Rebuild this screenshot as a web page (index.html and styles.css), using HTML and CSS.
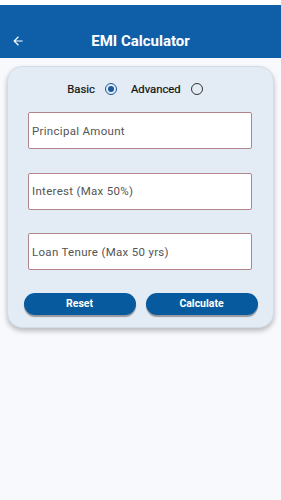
FILE: index.html
```html
<html>
  <head>
    <link rel="stylesheet" href="styles.css">
  </head>
  <body>
    <div class="statusBar"></div>
    <div class="appBar">
      <svg class="backIcon" width="14" height="14" viewBox="0 0 24 24">
        <path d="M20 11H7.8l5.6-5.6L12 4l-8 8 8 8 1.4-1.4L7.8 13H20z" fill="#fff"/>
      </svg>
      <h1>EMI Calculator</h1>
    </div>
    <div class="card">
      <div class="modeRow">
        <span class="modeLabel">Basic</span>
        <span class="radio checked"></span>
        <span class="modeLabel">Advanced</span>
        <span class="radio"></span>
      </div>
      <input class="field" type="text" placeholder="Principal Amount">
      <input class="field" type="text" placeholder="Interest (Max 50%)">
      <input class="field" type="text" placeholder="Loan Tenure (Max 50 yrs)">
      <div class="btnRow">
        <button class="btn">Reset</button>
        <button class="btn">Calculate</button>
      </div>
    </div>
  </body>
</html>
```
FILE: styles.css
```css
body {
  margin: 0;
  background-color: #f8f9fd;
  font-family: Roboto, "Noto Sans", sans-serif;
}

.statusBar {
  height: 5px;
  background: #ffffff;
}

.appBar {
  height: 53px;
  background-color: #0f5ea8;
  display: flex;
  align-items: center;
  padding-top: 19px;
  box-sizing: border-box;
}

.backIcon {
  margin-left: 11px;
}

.appBar h1 {
  margin: 0;
  flex: 1;
  text-align: center;
  color: #ffffff;
  font-size: 15px;
  font-weight: bold;
  padding-right: 25px;
}

.card {
  margin: 8px 7px 0 7px;
  height: 262px;
  box-sizing: border-box;
  background-color: #e3ebf4;
  border: 1px solid #d3dbe6;
  border-radius: 15px;
  box-shadow: 0 3px 5px rgba(0, 0, 0, 0.25);
  padding: 13px 20px 0 20px;
  display: flex;
  flex-direction: column;
  align-items: center;
}

.modeRow {
  display: flex;
  align-items: center;
  gap: 10px;
  height: 18px;
  margin-bottom: 14px;
  margin-right: 11px;
}

.modeLabel {
  font-size: 11.3px;
  color: #111;
  -webkit-text-stroke: 0.2px #111;
}

.radio {
  width: 10px;
  height: 10px;
  border: 1.5px solid #333;
  border-radius: 50%;
  position: relative;
}

.radio.checked {
  border-color: #1a5a9a;
  margin-right: 4px;
}

.radio.checked::after {
  content: "";
  position: absolute;
  left: 2px;
  top: 2px;
  width: 6px;
  height: 6px;
  border-radius: 50%;
  background: #1a5a9a;
}

.field {
  width: 224px;
  height: 37px;
  box-sizing: border-box;
  border: 1px solid #b2858c;
  border-radius: 2px;
  background: #ffffff;
  padding: 0 3px;
  font-family: Roboto, "Noto Sans", sans-serif;
  font-size: 11.5px;
  letter-spacing: 0.3px;
  margin-bottom: 23.5px;
  margin-left: -1px;
}

.field::placeholder {
  color: #555;
}

.btnRow {
  display: flex;
  gap: 10px;
  margin-top: -1px;
}

.btn {
  width: 112px;
  height: 22px;
  border: none;
  border-radius: 11px;
  background-color: #085a9e;
  color: #ffffff;
  font-family: Roboto, "Noto Sans", sans-serif;
  font-weight: bold;
  font-size: 10.5px;
  box-shadow: 0 2px 1px rgba(0, 0, 0, 0.35);
}
```
